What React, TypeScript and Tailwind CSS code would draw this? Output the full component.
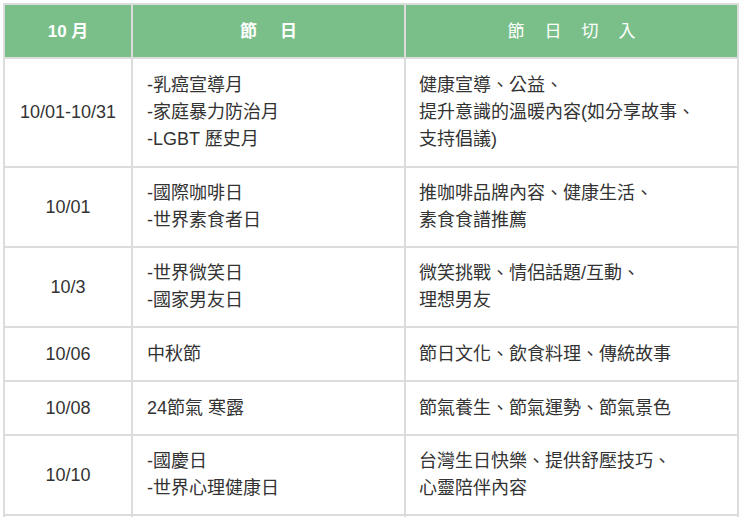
import React from "react";

type Row = { date: string; fest: string[]; angle: string[]; h: string };

const rows: Row[] = [
  { date: "10/01-10/31", fest: ["-乳癌宣導月", "-家庭暴力防治月", "-LGBT 歷史月"], angle: ["健康宣導、公益、", "提升意識的溫暖內容(如分享故事、", "支持倡議)"], h: "h-[109px]" },
  { date: "10/01", fest: ["-國際咖啡日", "-世界素食者日"], angle: ["推咖啡品牌內容、健康生活、", "素食食譜推薦"], h: "h-[80px]" },
  { date: "10/3", fest: ["-世界微笑日", "-國家男友日"], angle: ["微笑挑戰、情侶話題/互動、", "理想男友"], h: "h-[80px]" },
  { date: "10/06", fest: ["中秋節"], angle: ["節日文化、飲食料理、傳統故事"], h: "h-[54px]" },
  { date: "10/08", fest: ["24節氣 寒露"], angle: ["節氣養生、節氣運勢、節氣景色"], h: "h-[54px]" },
  { date: "10/10", fest: ["-國慶日", "-世界心理健康日"], angle: ["台灣生日快樂、提供舒壓技巧、", "心靈陪伴內容"], h: "h-[80px]" },
  { date: "", fest: [], angle: [], h: "h-[80px]" },
];

export default function App() {
  return (
    <div
      className="bg-white w-[740px] h-[517px] overflow-hidden pt-[3px] pl-[3px]"
      style={{ fontFamily: '"Liberation Sans", "Noto Sans CJK TC", sans-serif' }}
    >
      <table className="table-fixed border-collapse w-[734px] text-[#333] text-[18px] leading-[27px]">
        <colgroup>
          <col className="w-[128px]" />
          <col className="w-[273px]" />
          <col className="w-[333px]" />
        </colgroup>
        <thead>
          <tr className="h-[54px] bg-[#7abf89] text-white">
            <th className="border-2 border-[#dcdcdc] font-bold text-[17px] text-center">10 月</th>
            <th className="border-2 border-[#dcdcdc] font-bold text-[17px] text-center tracking-[23px] pl-[23px]">節日</th>
            <th className="border-2 border-[#dcdcdc] font-normal text-[17px] text-center tracking-[20px] pl-[20px]">節日切入</th>
          </tr>
        </thead>
        <tbody>
          {rows.map((r, i) => (
            <tr key={i} className={r.h}>
              <td className="border-2 border-[#dcdcdc] text-center align-middle">{r.date}</td>
              <td className="border-2 border-[#dcdcdc] pl-[14px] align-middle">
                {r.fest.map((f, j) => (
                  <div key={j}>{f}</div>
                ))}
              </td>
              <td className="border-2 border-[#dcdcdc] pl-[13px] align-middle">
                {r.angle.map((a, j) => (
                  <div key={j}>{a}</div>
                ))}
              </td>
            </tr>
          ))}
        </tbody>
      </table>
    </div>
  );
}
